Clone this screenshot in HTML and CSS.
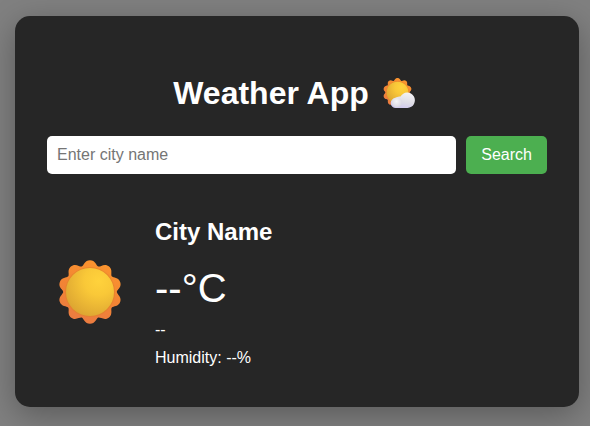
FILE: index.html
```html
<!DOCTYPE html>
<html lang="en">
<head>
<meta charset="utf-8">
<meta name="viewport" content="width=device-width, initial-scale=1">
<title>Weather App</title>
<link rel="stylesheet" href="styles.css">
</head>
<body>
<main class="card">
  <h1 class="title">Weather App
    <svg class="title-icon" viewBox="0 0 32 32" aria-hidden="true">
      <defs>
        <linearGradient id="cloud" x1="0.7" y1="0" x2="0.4" y2="1">
          <stop offset="0" stop-color="#f3f2f5"/>
          <stop offset="0.6" stop-color="#dedde6"/>
          <stop offset="1" stop-color="#cfc8ee"/>
        </linearGradient>
        <radialGradient id="puff" cx="0.45" cy="0.4" r="0.6">
          <stop offset="0" stop-color="#f6f6f7"/>
          <stop offset="1" stop-color="#d8d6e2"/>
        </radialGradient>
      </defs>
      <use href="#sun" x="0" y="1" width="29" height="29"/>
      <path d="M13 31a5 5 0 0 1-.6-10A6 6 0 0 1 17.500 19.500A7.700 7.700 0 1 1 24.500 31Z" fill="url(#cloud)"/>
      <circle cx="14" cy="25.400" r="5" fill="url(#puff)"/>
    </svg>
  </h1>
  <form class="search">
    <input class="search-input" type="text" placeholder="Enter city name" aria-label="City name">
    <button class="search-button" type="button">Search</button>
  </form>
  <section class="weather">
    <svg class="weather-icon" viewBox="0 0 64 64" aria-hidden="true">
      <defs>
        <path id="petal" d="M0 0L-8.300 -25.500C-6 -26.500 -5.500 -31.800 0 -31.800S6 -26.500 8.300 -25.500Z"/>
        <clipPath id="flower">
          <circle r="26"/>
          <use href="#petal"/>
          <use href="#petal" transform="rotate(36)"/>
          <use href="#petal" transform="rotate(72)"/>
          <use href="#petal" transform="rotate(108)"/>
          <use href="#petal" transform="rotate(144)"/>
          <use href="#petal" transform="rotate(180)"/>
          <use href="#petal" transform="rotate(216)"/>
          <use href="#petal" transform="rotate(252)"/>
          <use href="#petal" transform="rotate(288)"/>
          <use href="#petal" transform="rotate(324)"/>
        </clipPath>
        <linearGradient id="rays" x1="0.7" y1="0" x2="0.3" y2="1">
          <stop offset="0" stop-color="#fb962e"/>
          <stop offset="0.5" stop-color="#f28434"/>
          <stop offset="1" stop-color="#ea7b42"/>
        </linearGradient>
        <radialGradient id="disc" cx="0.68" cy="0.27" r="0.85">
          <stop offset="0" stop-color="#ffd23c"/>
          <stop offset="0.35" stop-color="#f9c838"/>
          <stop offset="1" stop-color="#d9a131"/>
        </radialGradient>
        <symbol id="sun" viewBox="-32 -32 64 64">
          <g clip-path="url(#flower)">
            <rect x="-32" y="-32" width="64" height="64" fill="url(#rays)"/>
            <circle r="25" fill="#df8429" opacity="0.6"/>
          </g>
          <circle r="24" fill="url(#disc)"/>
        </symbol>
      </defs>
      <use href="#sun" width="64" height="64"/>
    </svg>
    <div class="details">
      <h2 class="city">City Name</h2>
      <p class="temperature">--°C</p>
      <p class="line">--</p>
      <p class="line">Humidity: --%</p>
    </div>
  </section>
</main>
</body>
</html>
```
FILE: styles.css
```css
* {
  box-sizing: border-box;
}

body {
  margin: 0;
  padding: 16px 11px 19px 15px;
  background: #808080;
  color: #fff;
  font-family: Arial, "Liberation Sans", sans-serif;
  font-size: 16px;
  line-height: 18px;
}

.card {
  padding: 32px;
  border-radius: 15px;
  background: #262626;
  box-shadow: 0 8px 32px rgba(0, 0, 0, 0.3);
}

.title {
  display: flex;
  justify-content: center;
  align-items: center;
  gap: 14px;
  margin: 21px 0 19px;
  padding-right: 6px;
  font-size: 32px;
  line-height: 48px;
}

.title-icon {
  width: 32px;
  height: 32px;
}

.search {
  display: flex;
  gap: 10px;
}

.search-input {
  flex: 1;
  min-width: 0;
  height: 38px;
  padding: 10px;
  border: 0;
  border-radius: 5px;
  background: #fff;
  font: inherit;
}

.search-input::placeholder {
  color: #757575;
}

.search-button {
  padding: 10px 15px;
  border: 0;
  border-radius: 5px;
  background: #4caf50;
  color: #fff;
  font: inherit;
  cursor: pointer;
}

.weather {
  display: flex;
  align-items: center;
  gap: 33px;
  margin-top: 42px;
  padding: 0 0 8px 11px;
}

.weather-icon {
  width: 64px;
  height: 64px;
}

.city {
  margin: 0 0 17px;
  font-size: 24px;
  line-height: 32px;
}

.temperature {
  margin: 0;
  font-size: 40px;
  line-height: 46px;
}

.line {
  margin: 10px 0 0;
}
```
